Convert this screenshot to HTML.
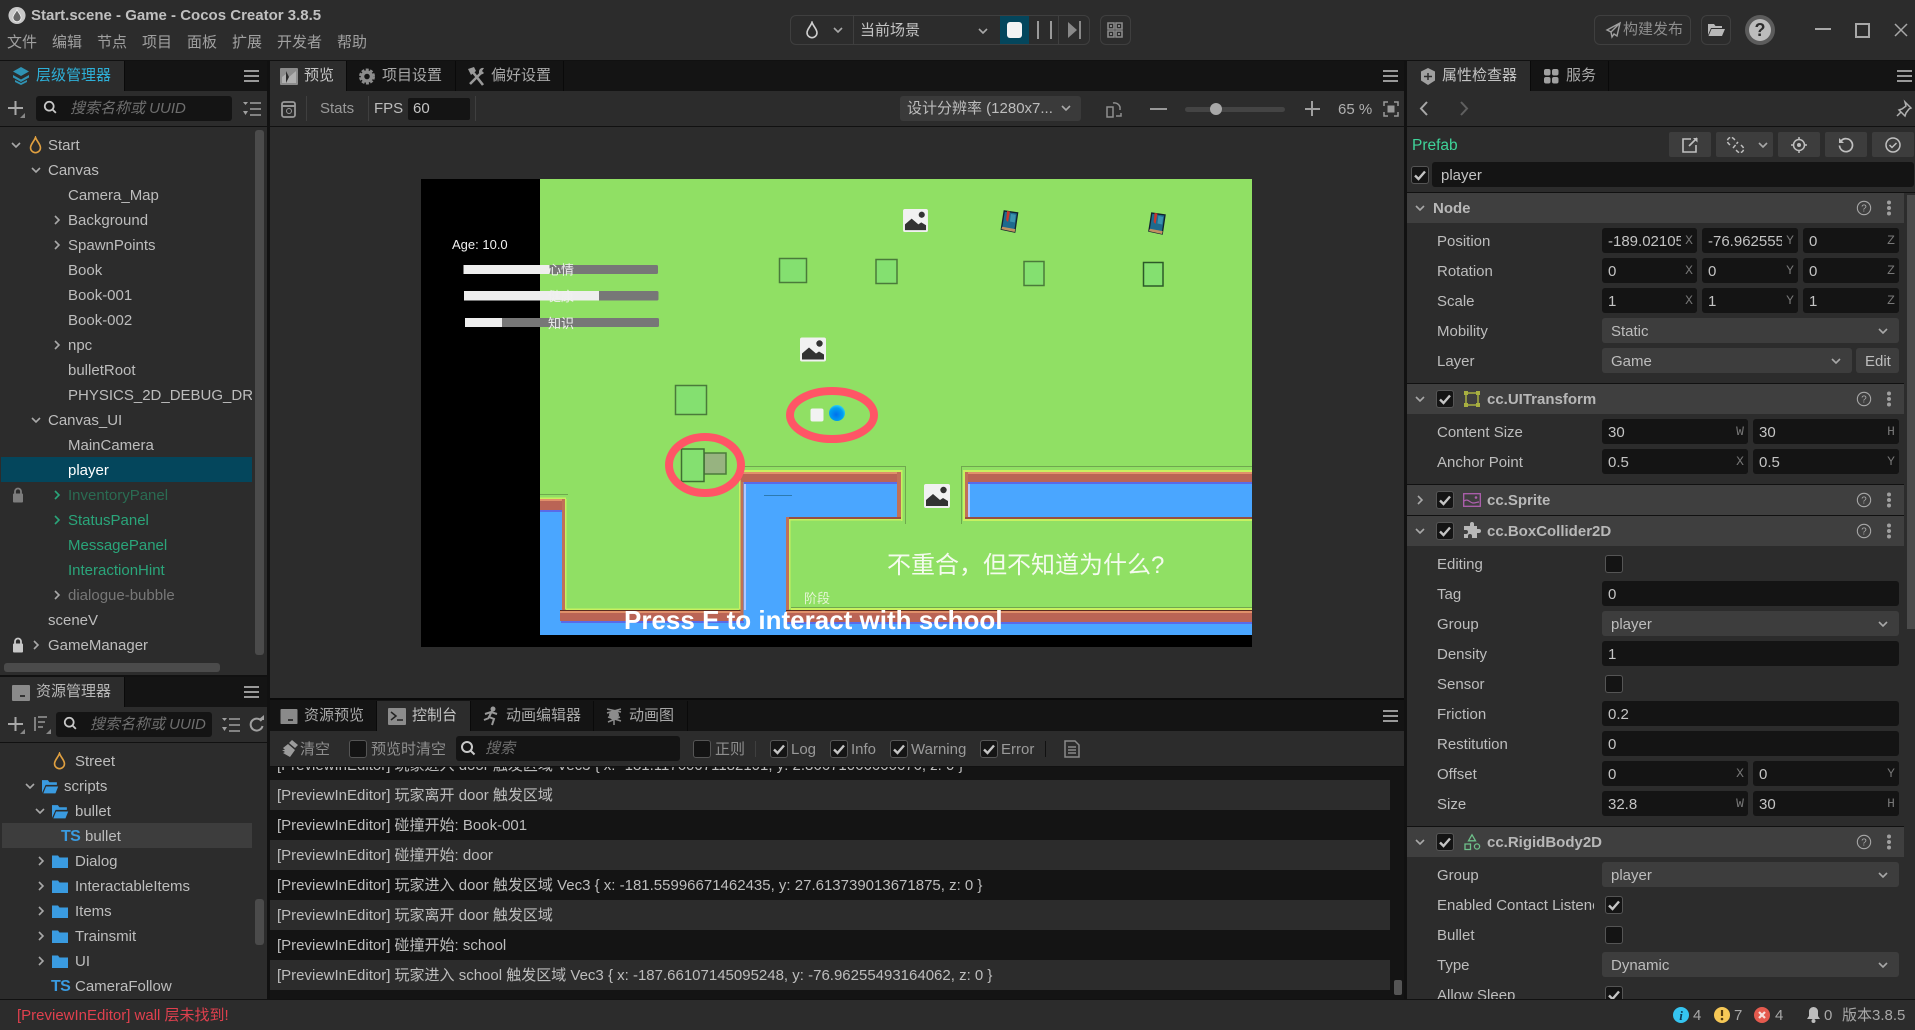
<!DOCTYPE html>
<html lang="zh"><head><meta charset="utf-8"><title>Start.scene - Game - Cocos Creator 3.8.5</title>
<style>
html,body{margin:0;padding:0;width:1915px;height:1030px;overflow:hidden;background:#2c2c2c}
body{position:relative;font:15px "Liberation Sans","Noto Sans CJK SC",sans-serif;color:#bdbdbd}
.a{position:absolute}
.t{position:absolute;white-space:nowrap;line-height:25px;height:25px}
.l{margin-top:1px}
.d{position:absolute;background:#111}
.bar{position:absolute;background:#141414}
.tab{position:absolute;background:#141414;border-right:1px solid #0a0a0a;height:30px}
.tab.on{background:#2c2c2c}
.in{position:absolute;background:#141414;border-radius:3px;height:25px;line-height:27px;color:#c4c4c4;padding-left:6px;box-sizing:border-box;overflow:hidden;white-space:nowrap}
.in b{position:absolute;right:0;top:0;font:13px "Liberation Mono",monospace;line-height:25px;color:#777;font-weight:400;background:#141414;width:16px;text-align:center}
.sel{position:absolute;background:#3d3d3d;border-radius:3px;height:25px;line-height:27px;color:#bdbdbd;padding-left:9px;box-sizing:border-box}
.cb{position:absolute;width:16px;height:16px;background:#141414;border:1px solid #555;border-radius:3px}
.hd{position:absolute;left:1407px;width:497px;height:30px;background:#3f3f3f;line-height:32px}
.hd span{position:absolute;left:80px;font-weight:700;color:#b8b8b8;white-space:nowrap}
.hd.n span{left:26px}
.row{position:absolute;left:270px;width:1120px;height:30px;line-height:32px;white-space:nowrap;color:#bdbdbd;padding-left:7px;box-sizing:border-box;overflow:hidden}
.btn{position:absolute;top:132px;height:25px;background:#3d3d3d;border-radius:2px}
svg{position:absolute;overflow:visible}
.hb{position:absolute;width:15px;height:12px;border-top:2px solid #999;border-bottom:2px solid #999;box-sizing:border-box}
.hb:after{content:"";position:absolute;left:0;right:0;top:3px;height:2px;background:#999}
.ts{font-weight:700;font-size:16px;color:#3a9be0;letter-spacing:-.6px}
</style></head><body>
<svg width="0" height="0" style="position:absolute">
<defs>
<symbol id="cd" viewBox="0 0 12 12"><path d="M2 4l4 4 4-4" fill="none" stroke="#a8a8a8" stroke-width="1.6"/></symbol>
<symbol id="cr" viewBox="0 0 12 12"><path d="M4 2l4 4-4 4" fill="none" stroke="#a8a8a8" stroke-width="1.6"/></symbol>
<symbol id="ck" viewBox="0 0 18 18"><path d="M4 9.500l3.500 3.500L14 5.500" fill="none" stroke="#c4c4c4" stroke-width="2.400"/></symbol>
<symbol id="dr" viewBox="0 0 14 20"><path d="M7 1.500C5.500 6 1.500 9 1.500 13a5.500 5.500 0 0 0 11 0C12.500 9 8.500 6 7 1.500z" fill="none" stroke="currentColor" stroke-width="1.800"/></symbol>
<symbol id="fo" viewBox="0 0 16 14"><path d="M0 1.500h6l1.500 2H16V14H0z" fill="#3a9be0"/></symbol>
<symbol id="fx" viewBox="0 0 16 14"><path d="M0 1h5.500l1.500 2H14v2.500H3.500L0 13z" fill="#3a9be0"/><path d="M3.500 6.500H16L13 14H.5z" fill="#3a9be0" stroke="#2c2c2c"/></symbol>
<symbol id="lk" viewBox="0 0 12 16"><path d="M3 7V4.500a3 3 0 0 1 6 0V7" fill="none" stroke="#a0a0a0" stroke-width="1.800"/><rect x="1" y="6.500" width="10" height="9" rx="1" fill="#a0a0a0"/></symbol>
<symbol id="pl" viewBox="0 0 18 18"><path d="M8.500 1v14M1 8h15" stroke="#a8a8a8" stroke-width="2"/><path d="M18 13v5h-5z" fill="#888"/></symbol>
<symbol id="mg" viewBox="0 0 18 18"><circle cx="7" cy="7" r="5" fill="none" stroke="#c8c8c8" stroke-width="2"/><path d="M10.500 10.500l4 4" stroke="#c8c8c8" stroke-width="2"/></symbol>
<symbol id="ls" viewBox="0 0 18 14"><path d="M7 1h11M7 7h11M7 13h11" stroke="#a0a0a0" stroke-width="1.500"/><path d="M0 0h5L2.500 3zM0 9h5l-2.500 4z" fill="#a0a0a0"/></symbol>
<symbol id="qm" viewBox="0 0 18 18"><circle cx="9" cy="9" r="7.500" fill="none" stroke="#a8a8a8" stroke-width="1.200"/><text x="9" y="13" font-family="Liberation Sans" font-size="11" text-anchor="middle" fill="#a8a8a8">?</text></symbol>
<symbol id="vd" viewBox="0 0 6 16"><circle cx="3" cy="2.500" r="2" fill="#a0a0a0"/><circle cx="3" cy="8" r="2" fill="#a0a0a0"/><circle cx="3" cy="13.500" r="2" fill="#a0a0a0"/></symbol>
<symbol id="pic" viewBox="0 0 26 24"><rect width="26" height="24" rx="2" fill="#f1f1f1"/><path d="M2 22v-6l7-6 7 6 3-2 5 3v5z" fill="#333"/><circle cx="19.500" cy="6" r="3.200" fill="#333"/></symbol>
<symbol id="bk" viewBox="0 0 20 24"><path d="M5 1l14 2-3 20-14-3z" fill="#1e6a8e" stroke="#10222e" stroke-width="1.400"/><path d="M3 17.500l13.500 2.500-.6 3-13.900-3z" fill="#c09060"/><path d="M8 1l3 .5-2 11-2-2z" fill="#c8372a"/><path d="M12 4l5 1-1 8-5-1z" fill="#3a92ae"/></symbol>
<symbol id="tb" viewBox="0 0 18 18"><rect y="1" width="18" height="16" rx="1" fill="#8a8a8a"/></symbol>
</defs></svg>

<!-- TITLE BAR -->
<svg style="left:8px;top:6px" width="18" height="19" viewBox="0 0 20 20"><circle cx="10" cy="10" r="9.500" fill="#c8c8c8"/><path d="M10 3.500c-1 3-4.500 5.500-4.500 9a4.500 4.500 0 0 0 9 0c0-3.500-3.500-6-4.500-9z" fill="#666" stroke="#eee"/></svg>
<div class="t" style="left:31px;top:3px;font-size:15px;font-weight:700;color:#c0c0c0">Start.scene - Game - Cocos Creator 3.8.5</div>
<div class="t" style="left:7px;top:30px;color:#a0a0a0">文件</div>
<div class="t" style="left:52px;top:30px;color:#a0a0a0">编辑</div>
<div class="t" style="left:97px;top:30px;color:#a0a0a0">节点</div>
<div class="t" style="left:142px;top:30px;color:#a0a0a0">项目</div>
<div class="t" style="left:187px;top:30px;color:#a0a0a0">面板</div>
<div class="t" style="left:232px;top:30px;color:#a0a0a0">扩展</div>
<div class="t" style="left:277px;top:30px;color:#a0a0a0">开发者</div>
<div class="t" style="left:337px;top:30px;color:#a0a0a0">帮助</div>

<div class="a" style="left:790px;top:15px;width:298px;height:28px;border:1px solid #3f3f3f;border-radius:6px"></div>
<svg style="left:805px;top:21px;color:#cfcfcf" width="14" height="18"><use href="#dr"/></svg>
<svg style="left:832px;top:24px" width="12" height="12"><use href="#cd"/></svg>
<div class="a" style="left:853px;top:16px;width:1px;height:28px;background:#3f3f3f"></div>
<div class="t" style="left:860px;top:18px;color:#c4c4c4">当前场景</div>
<svg style="left:977px;top:25px" width="12" height="12"><use href="#cd"/></svg>
<div class="a" style="left:1000px;top:16px;width:29px;height:28px;background:#04465c"></div>
<div class="a" style="left:1007px;top:22px;width:15px;height:16px;background:#f4f4f4;border-radius:3px"></div>
<div class="a" style="left:1037px;top:21px;width:2px;height:18px;background:#9a9a9a"></div>
<div class="a" style="left:1050px;top:21px;width:2px;height:18px;background:#9a9a9a"></div>
<div class="a" style="left:1058px;top:16px;width:1px;height:28px;background:#3f3f3f"></div>
<svg style="left:1067px;top:21px" width="15" height="18"><path d="M1 1l9 8-9 8z" fill="#888"/><path d="M13 0v18" stroke="#888" stroke-width="2"/></svg>
<div class="a" style="left:1100px;top:15px;width:29px;height:28px;border:1px solid #3f3f3f;border-radius:6px"></div>
<svg style="left:1107px;top:22px" width="16" height="16"><path d="M1 1h6v6H1zM9 1h6v6H9zM1 9h6v6H1zM9 9h6v6H9z" fill="none" stroke="#8a8a8a" stroke-width="1.600"/><path d="M3 3h2v2H3zM11 3h2v2h-2zM3 11h2v2H3zM11 11h2v2h-2z" fill="#8a8a8a"/></svg>

<div class="a" style="left:1594px;top:15px;width:95px;height:28px;border:1px solid #3f3f3f;border-radius:6px"></div>
<svg style="left:1606px;top:22px" width="15" height="16"><path d="M14 1L1 8l4 2 1 5 2-3 3 2zM5 10l9-9" fill="none" stroke="#a0a0a0" stroke-width="1.400"/></svg>
<div class="t" style="left:1623px;top:17px;color:#8e8e8e">构建发布</div>
<div class="a" style="left:1701px;top:15px;width:28px;height:28px;border:1px solid #3f3f3f;border-radius:6px"></div>
<svg style="left:1708px;top:23px" width="17" height="13"><path d="M0 1h6l1.500 2H14v2H3L0 12z" fill="#b8b8b8"/><path d="M3.500 6H17l-3 7H.5z" fill="#b8b8b8"/></svg>
<div class="a" style="left:1745px;top:15px;width:30px;height:30px;border-radius:50%;background:#5c5c5c"></div>
<div class="a" style="left:1749px;top:19px;width:22px;height:22px;border-radius:50%;background:#bcbcbc;color:#2c2c2c;font-weight:700;font-size:18px;line-height:22px;text-align:center">?</div>
<div class="a" style="left:1815px;top:28px;width:16px;height:2px;background:#a8a8a8"></div>
<div class="a" style="left:1855px;top:23px;width:11px;height:11px;border:2px solid #a8a8a8"></div>
<svg style="left:1894px;top:23px" width="14" height="14"><path d="M1 1l12 12M13 1L1 13" stroke="#a8a8a8" stroke-width="1.500"/></svg>

<div class="d" style="left:0;top:60px;width:1915px;height:1px"></div>

<!-- LEFT: HIERARCHY -->
<div class="bar" style="left:0;top:61px;width:267px;height:30px"></div>
<div class="tab on" style="left:0;top:61px;width:124px"></div>
<svg style="left:12px;top:67px" width="18" height="18"><path d="M9 0l8 4.500-8 4.500-8-4.500z" fill="#2f93b4"/><path d="M1 8l8 4.500L17 8v2.500L9 15l-8-4.500z" fill="#2f93b4"/><path d="M3 13l6 3 6-3v2l-6 3-6-3z" fill="#2f93b4"/></svg>
<div class="t" style="left:36px;top:63px;color:#2eb0d8">层级管理器</div>
<div class="hb" style="left:244px;top:70px"></div>
<svg style="left:7px;top:100px" width="18" height="18"><use href="#pl"/></svg>
<div class="in" style="left:36px;top:96px;width:196px"></div>
<svg style="left:43px;top:100px" width="16" height="16"><use href="#mg"/></svg>
<div class="t" style="left:70px;top:96px;font-style:italic;color:#6e6e6e">搜索名称或 UUID</div>
<svg style="left:243px;top:102px" width="18" height="14"><use href="#ls"/></svg>
<div class="d" style="left:0;top:126px;width:267px;height:1px"></div>

<svg style="left:10px;top:139px" width="12" height="12"><use href="#cd"/></svg>
<svg style="left:29px;top:136px;color:#e0a040" width="13" height="18"><use href="#dr"/></svg>
<div class="t l" style="left:48px;top:132px">Start</div>
<svg style="left:30px;top:164px" width="12" height="12"><use href="#cd"/></svg>
<div class="t l" style="left:48px;top:157px">Canvas</div>
<div class="t l" style="left:68px;top:182px">Camera_Map</div>
<svg style="left:51px;top:214px" width="12" height="12"><use href="#cr"/></svg>
<div class="t l" style="left:68px;top:207px">Background</div>
<svg style="left:51px;top:239px" width="12" height="12"><use href="#cr"/></svg>
<div class="t l" style="left:68px;top:232px">SpawnPoints</div>
<div class="t l" style="left:68px;top:257px">Book</div>
<div class="t l" style="left:68px;top:282px">Book-001</div>
<div class="t l" style="left:68px;top:307px">Book-002</div>
<svg style="left:51px;top:339px" width="12" height="12"><use href="#cr"/></svg>
<div class="t l" style="left:68px;top:332px">npc</div>
<div class="t l" style="left:68px;top:357px">bulletRoot</div>
<div class="a" style="left:68px;top:382px;width:184px;height:27px;overflow:hidden"><div class="t l" style="left:0;top:0">PHYSICS_2D_DEBUG_DRAW</div></div>
<svg style="left:30px;top:414px" width="12" height="12"><use href="#cd"/></svg>
<div class="t l" style="left:48px;top:407px">Canvas_UI</div>
<div class="t l" style="left:68px;top:432px">MainCamera</div>
<div class="a" style="left:1px;top:457px;width:251px;height:25px;background:#04465c"></div>
<div class="t l" style="left:68px;top:457px;color:#fff">player</div>
<svg style="left:12px;top:487px" width="12" height="16" opacity=".7"><use href="#lk"/></svg>
<svg style="left:51px;top:489px" width="12" height="12"><path d="M4 2l4 4-4 4" fill="none" stroke="#2aa57a" stroke-width="1.600"/></svg>
<div class="t l" style="left:68px;top:482px;color:#2a6b52">InventoryPanel</div>
<svg style="left:51px;top:514px" width="12" height="12"><path d="M4 2l4 4-4 4" fill="none" stroke="#2aa57a" stroke-width="1.600"/></svg>
<div class="t l" style="left:68px;top:507px;color:#2aa57a">StatusPanel</div>
<div class="t l" style="left:68px;top:532px;color:#2aa57a">MessagePanel</div>
<div class="t l" style="left:68px;top:557px;color:#2aa57a">InteractionHint</div>
<svg style="left:51px;top:589px" width="12" height="12"><use href="#cr"/></svg>
<div class="t l" style="left:68px;top:582px;color:#777">dialogue-bubble</div>
<div class="t l" style="left:48px;top:607px">sceneV</div>
<svg style="left:12px;top:637px" width="12" height="16"><path d="M3 7V4.500a3 3 0 0 1 6 0V7" fill="none" stroke="#c8c8c8" stroke-width="1.800"/><rect x="1" y="6.500" width="10" height="9" rx="1" fill="#c8c8c8"/></svg>
<svg style="left:30px;top:639px" width="12" height="12"><use href="#cr"/></svg>
<div class="t l" style="left:48px;top:632px">GameManager</div>
<div class="a" style="left:255px;top:130px;width:9px;height:525px;background:#4b4b4b;border-radius:3px"></div>
<div class="a" style="left:4px;top:663px;width:216px;height:9px;background:#4b4b4b;border-radius:3px"></div>
<div class="d" style="left:0;top:675px;width:267px;height:2px"></div>

<!-- LEFT: ASSETS -->
<div class="bar" style="left:0;top:677px;width:267px;height:30px"></div>
<div class="tab on" style="left:0;top:677px;width:124px"></div>
<svg style="left:12px;top:684px" width="18" height="18"><use href="#tb"/><rect x="8" y="11" width="5" height="2" fill="#333"/></svg>
<div class="t" style="left:36px;top:679px;color:#b8b8b8">资源管理器</div>
<div class="hb" style="left:244px;top:686px"></div>
<svg style="left:7px;top:716px" width="18" height="18"><use href="#pl"/></svg>
<svg style="left:33px;top:716px" width="18" height="18"><path d="M2 1v14M5 1h9M5 6h7M5 11h5" stroke="#8a8a8a" stroke-width="1.800"/><path d="M18 13v5h-5z" fill="#888"/></svg>
<div class="in" style="left:56px;top:712px;width:156px"></div>
<svg style="left:63px;top:716px" width="16" height="16"><use href="#mg"/></svg>
<div class="t" style="left:90px;top:712px;font-style:italic;color:#6e6e6e">搜索名称或 UUID</div>
<svg style="left:222px;top:718px" width="18" height="14"><use href="#ls"/></svg>
<svg style="left:249px;top:716px" width="15" height="17"><path d="M12.500 5A6 6 0 1 0 13.500 10" fill="none" stroke="#a0a0a0" stroke-width="2"/><path d="M9 4h6V-1z" fill="#a0a0a0"/></svg>
<div class="d" style="left:0;top:742px;width:267px;height:1px"></div>

<svg style="left:53px;top:752px;color:#e0a040" width="13" height="18"><use href="#dr"/></svg>
<div class="t" style="left:75px;top:749px">Street</div>
<svg style="left:24px;top:780px" width="12" height="12"><use href="#cd"/></svg>
<svg style="left:42px;top:779px" width="17" height="15"><use href="#fx"/></svg>
<div class="t" style="left:64px;top:774px">scripts</div>
<svg style="left:34px;top:805px" width="12" height="12"><use href="#cd"/></svg>
<svg style="left:52px;top:804px" width="17" height="15"><use href="#fx"/></svg>
<div class="t" style="left:75px;top:799px">bullet</div>
<div class="a" style="left:2px;top:823px;width:250px;height:25px;background:#3d3d3d"></div>
<div class="t ts" style="left:61px;top:824px">TS</div>
<div class="t" style="left:85px;top:824px">bullet</div>
<svg style="left:35px;top:855px" width="12" height="12"><use href="#cr"/></svg>
<svg style="left:52px;top:854px" width="16" height="14"><use href="#fo"/></svg>
<div class="t" style="left:75px;top:849px">Dialog</div>
<svg style="left:35px;top:880px" width="12" height="12"><use href="#cr"/></svg>
<svg style="left:52px;top:879px" width="16" height="14"><use href="#fo"/></svg>
<div class="t" style="left:75px;top:874px">InteractableItems</div>
<svg style="left:35px;top:905px" width="12" height="12"><use href="#cr"/></svg>
<svg style="left:52px;top:904px" width="16" height="14"><use href="#fo"/></svg>
<div class="t" style="left:75px;top:899px">Items</div>
<svg style="left:35px;top:930px" width="12" height="12"><use href="#cr"/></svg>
<svg style="left:52px;top:929px" width="16" height="14"><use href="#fo"/></svg>
<div class="t" style="left:75px;top:924px">Trainsmit</div>
<svg style="left:35px;top:955px" width="12" height="12"><use href="#cr"/></svg>
<svg style="left:52px;top:954px" width="16" height="14"><use href="#fo"/></svg>
<div class="t" style="left:75px;top:949px">UI</div>
<div class="t ts" style="left:51px;top:974px">TS</div>
<div class="t" style="left:75px;top:974px">CameraFollow</div>
<div class="a" style="left:255px;top:899px;width:9px;height:46px;background:#4b4b4b;border-radius:3px"></div>

<!-- vertical dividers -->
<div class="d" style="left:267px;top:61px;width:3px;height:939px"></div>
<div class="d" style="left:1404px;top:61px;width:3px;height:939px"></div>

<!-- CENTER TABS -->
<div class="bar" style="left:270px;top:61px;width:1134px;height:30px"></div>
<div class="tab on" style="left:270px;top:61px;width:76px"></div>
<svg style="left:280px;top:68px" width="18" height="17"><rect width="18" height="17" rx="1" fill="#8c8c8c"/><path d="M2 15V9l4-3 3 3 7-6v12z" fill="#b0b0b0"/><path d="M6 3l3 6-3 6z" fill="#2c2c2c"/></svg>
<div class="t" style="left:304px;top:63px;color:#c4c4c4">预览</div>
<div class="tab" style="left:347px;top:61px;width:108px"></div>
<svg style="left:359px;top:68px" width="16" height="17"><circle cx="8" cy="8.500" r="7" fill="none" stroke="#8c8c8c" stroke-width="2" stroke-dasharray="3 1.500"/><circle cx="8" cy="8.500" r="4.500" fill="none" stroke="#8c8c8c" stroke-width="3.500"/></svg>
<div class="t" style="left:382px;top:63px;color:#a8a8a8">项目设置</div>
<div class="tab" style="left:456px;top:61px;width:107px"></div>
<svg style="left:467px;top:67px" width="18" height="19"><path d="M5 4l11 14" stroke="#999" stroke-width="2.600"/><path d="M1 2l6-2 2 4-5 4z" fill="#999"/><path d="M15 5L3 17" stroke="#999" stroke-width="2.600"/><path d="M12 4a4 4 0 0 1 5-3l-2 3 2 2a4 4 0 0 1-5 1z" fill="#999"/></svg>
<div class="t" style="left:491px;top:63px;color:#a8a8a8">偏好设置</div>
<div class="hb" style="left:1383px;top:70px"></div>

<!-- PREVIEW TOOLBAR -->
<svg style="left:281px;top:101px" width="16" height="18"><rect x="1" y="1" width="13" height="15" rx="2" fill="none" stroke="#999" stroke-width="1.800"/><path d="M1 5h13" stroke="#999" stroke-width="2"/><circle cx="8" cy="10" r="2.500" fill="none" stroke="#999"/></svg>
<div class="a" style="left:306px;top:96px;width:1px;height:25px;background:#3f3f3f"></div>
<div class="t l" style="left:320px;top:95px;color:#999">Stats</div>
<div class="a" style="left:368px;top:96px;width:1px;height:25px;background:#3f3f3f"></div>
<div class="t l" style="left:374px;top:95px;color:#bdbdbd">FPS</div>
<div class="in" style="left:408px;top:98px;width:62px;height:22px;line-height:22px;padding-left:5px;border-radius:2px">60</div>
<div class="a" style="left:475px;top:96px;width:1px;height:25px;background:#3f3f3f"></div>
<div class="a" style="left:900px;top:96px;width:181px;height:25px;background:#3a3a3a;border-radius:3px"></div>
<div class="t l" style="left:907px;top:95px;color:#bdbdbd">设计分辨率 (1280x7...</div>
<svg style="left:1060px;top:102px" width="12" height="12"><use href="#cd"/></svg>
<svg style="left:1106px;top:100px" width="16" height="18"><rect x="1" y="7" width="6" height="10" fill="none" stroke="#8e8e8e" stroke-width="1.500"/><path d="M7 3a6 6 0 0 1 7 4v3M10 16h5v-3" fill="none" stroke="#8e8e8e" stroke-width="1.500"/></svg>
<div class="a" style="left:1150px;top:108px;width:17px;height:2px;background:#999"></div>
<div class="a" style="left:1185px;top:107px;width:100px;height:5px;background:#444;border-radius:3px"></div>
<div class="a" style="left:1210px;top:103px;width:12px;height:12px;background:#a8a8a8;border-radius:50%"></div>
<div class="a" style="left:1305px;top:108px;width:15px;height:2px;background:#a0a0a0"></div>
<div class="a" style="left:1311px;top:101px;width:2px;height:15px;background:#a0a0a0"></div>
<div class="t" style="left:1338px;top:97px;color:#b0b0b0">65 %</div>
<svg style="left:1383px;top:101px" width="16" height="16"><path d="M1 5V1h4M11 1h4v4M15 11v4h-4M5 15H1v-4" fill="none" stroke="#999" stroke-width="1.500"/><rect x="4.500" y="4.500" width="7" height="7" fill="#999"/></svg>
<div class="d" style="left:270px;top:126px;width:1134px;height:1px"></div>

<!-- GAME -->
<svg style="left:0;top:0" width="1915" height="1030" viewBox="0 0 1915 1030" font-family="Liberation Sans,Noto Sans CJK SC,sans-serif">
<rect x="421" y="179" width="831" height="468" fill="#000"/>
<rect x="540" y="179" width="712" height="456" fill="#90e064"/>
<g fill="#4aa6ff">
<rect x="540" y="512" width="24" height="123"/><rect x="540" y="620" width="712" height="15"/>
<rect x="743" y="480" width="46" height="140"/><rect x="743" y="480" width="156" height="38"/><rect x="966" y="480" width="286" height="38"/>
</g>
<g>
<rect x="540" y="494" width="28" height="1" fill="#6fa84e"/>
<rect x="540" y="497.500" width="26" height="1.500" fill="#c8f060"/>
<rect x="540" y="499" width="24" height="11" fill="#ba6455"/><rect x="540" y="499" width="24" height="2" fill="#e0906a"/>
<rect x="540" y="510" width="22" height="2" fill="#5a6ae8"/>
<rect x="562" y="499" width="3" height="112" fill="#c07058"/><rect x="565" y="499" width="1.500" height="110" fill="#c8f060"/>
<rect x="566" y="608.500" width="173" height="1.500" fill="#c8f060"/>
<rect x="560" y="610" width="183" height="11" fill="#ba6455"/><rect x="560" y="610" width="183" height="1" fill="#5a2a20"/><rect x="560" y="611" width="183" height="2" fill="#e0906a"/>
<rect x="561" y="621" width="183" height="2" fill="#5a6ae8"/>
<rect x="739" y="470" width="1.500" height="139" fill="#c8f060"/><rect x="740.500" y="472" width="3" height="148" fill="#c07058"/><rect x="744" y="483" width="2" height="127" fill="#b0c8ff"/>
<rect x="742" y="466" width="164" height="1" fill="#6fa84e"/><rect x="905" y="466" width="1" height="58" fill="#6fa84e"/>
<rect x="741" y="470" width="161" height="2" fill="#c8f060"/>
<rect x="741" y="472" width="160" height="10" fill="#ba6455"/><rect x="741" y="472" width="160" height="2" fill="#e0906a"/>
<rect x="744" y="482" width="153" height="2" fill="#5a6ae8"/>
<rect x="897" y="472" width="4" height="47" fill="#c07058"/><rect x="901" y="470" width="1.500" height="51" fill="#c8f060"/>
<rect x="787" y="517" width="114" height="2" fill="#9a4f3f"/><rect x="789" y="519" width="113" height="1.500" fill="#c8f060"/>
<rect x="786" y="517" width="3" height="96" fill="#c07058"/><rect x="789" y="519" width="1.500" height="90" fill="#c8f060"/>
<rect x="764" y="495" width="28" height="1" fill="#2d7ab0"/>
<rect x="791" y="607" width="461" height="1" fill="#6fa84e"/><rect x="791" y="608" width="461" height="2" fill="#c8f060"/>
<rect x="786" y="610" width="466" height="12" fill="#ba6455"/><rect x="786" y="610" width="466" height="1" fill="#5a2a20"/><rect x="786" y="611" width="466" height="2" fill="#e0906a"/>
<rect x="786" y="622" width="466" height="2" fill="#5a6ae8"/>
<rect x="961" y="466" width="291" height="1" fill="#6fa84e"/><rect x="961" y="466" width="1" height="58" fill="#6fa84e"/>
<rect x="963" y="470" width="289" height="2" fill="#c8f060"/><rect x="963" y="470" width="2" height="51" fill="#c8f060"/>
<rect x="965" y="472" width="287" height="10" fill="#ba6455"/><rect x="965" y="472" width="287" height="2" fill="#e0906a"/>
<rect x="968" y="482" width="284" height="2" fill="#5a6ae8"/>
<rect x="965" y="472" width="3" height="47" fill="#c07058"/><rect x="968" y="484" width="2" height="33" fill="#b0c8ff"/>
<rect x="965" y="517" width="287" height="2" fill="#9a4f3f"/><rect x="963" y="519" width="289" height="2" fill="#c8f060"/>
</g>
<g fill="#84e070" stroke="#4a7a3a" stroke-width="1.500">
<rect x="779.500" y="258.500" width="27" height="24"/><rect x="876" y="259.500" width="21" height="24"/><rect x="1024" y="261.500" width="20" height="24"/><rect x="1143.500" y="262.500" width="19.500" height="23.500" stroke="#2c5a28"/><rect x="675.500" y="385.500" width="31" height="29"/>
</g>
<rect x="704" y="453" width="22" height="21" fill="#97b380" stroke="#4a7a3a" stroke-width="1.500"/>
<rect x="681.500" y="449" width="22.500" height="32.500" fill="#84e070" stroke="#3e6e32" stroke-width="1.500"/>
<use href="#pic" x="902" y="209" width="27" height="23"/><use href="#pic" x="800" y="337" width="26" height="25"/><use href="#pic" x="924" y="484" width="26" height="24"/>
<use href="#bk" x="999" y="210" width="20" height="23"/><use href="#bk" x="1147" y="212" width="19" height="23"/>
<ellipse cx="832" cy="415" rx="42" ry="24" fill="none" stroke="#ff5566" stroke-width="8"/>
<ellipse cx="705" cy="465" rx="36" ry="28" fill="none" stroke="#ff5566" stroke-width="8"/>
<rect x="810.500" y="408.500" width="13" height="13" rx="2" fill="#f2f2f2"/>
<defs><radialGradient id="ball" cx=".45" cy=".6" r=".6"><stop offset="0" stop-color="#0070ee"/><stop offset=".7" stop-color="#00a0f0"/><stop offset="1" stop-color="#30d0f0"/></radialGradient></defs>
<circle cx="837" cy="413" r="8" fill="url(#ball)"/>
<text x="452" y="249" font-size="13" fill="#f0f0f0">Age: 10.0</text>
<g fill="#777"><rect x="463.500" y="265" width="194.500" height="9" rx="1.500"/><rect x="464" y="291" width="194.500" height="9.500" rx="1.500"/><rect x="465" y="318" width="194" height="9" rx="1.500"/></g>
<g fill="#eeeeee"><rect x="463.500" y="265" width="86" height="9"/><rect x="464" y="291" width="135" height="9.500"/><rect x="465" y="318" width="37" height="9"/></g>
<g font-size="13" fill="#f0f0f0" text-anchor="middle"><text x="561" y="274.500">心情</text><text x="561" y="301">健康</text><text x="561" y="328">知识</text></g>
<text x="804" y="603" font-size="13" fill="#e4f5d4">阶段</text>
<text x="887" y="573" font-size="24" fill="#f4fbee">不重合，但不知道为什么?</text>
<text x="624" y="629" font-size="26" font-weight="700" fill="#fff">Press E to interact with school</text>
</svg>

<div class="d" style="left:270px;top:698px;width:1134px;height:2px;background:#0a0a0a"></div>

<!-- BOTTOM TABS -->
<div class="bar" style="left:270px;top:700px;width:1134px;height:31px"></div>
<div class="tab" style="left:270px;top:701px;width:106px"></div>
<svg style="left:280px;top:708px" width="18" height="17"><use href="#tb"/><rect x="8" y="11" width="5" height="2" fill="#333"/></svg>
<div class="t" style="left:304px;top:703px;color:#a8a8a8">资源预览</div>
<div class="tab on" style="left:377px;top:701px;width:93px"></div>
<svg style="left:388px;top:708px" width="18" height="17"><rect width="18" height="17" rx="1" fill="#8c8c8c"/><path d="M3 4l5 4-5 4M9 12h6" fill="none" stroke="#222" stroke-width="1.500"/></svg>
<div class="t" style="left:412px;top:703px;color:#c4c4c4">控制台</div>
<div class="tab" style="left:471px;top:701px;width:122px"></div>
<svg style="left:483px;top:706px" width="17" height="20"><circle cx="10" cy="3" r="2.500" fill="#999"/><path d="M9 5L6 11l5 2-2 6M2 8l6-2 6 2M6 12L1 14" fill="none" stroke="#999" stroke-width="2"/></svg>
<div class="t" style="left:506px;top:703px;color:#a8a8a8">动画编辑器</div>
<div class="tab" style="left:594px;top:701px;width:93px"></div>
<svg style="left:605px;top:706px" width="18" height="20"><circle cx="9" cy="9" r="5" fill="#8c8c8c"/><path d="M2 3l14 3M16 3L2 7M3 11l13 4M15 11L3 16M9 14v5" stroke="#8c8c8c" stroke-width="1.500"/></svg>
<div class="t" style="left:629px;top:703px;color:#a8a8a8">动画图</div>
<div class="hb" style="left:1383px;top:710px"></div>

<!-- CONSOLE TOOLBAR -->
<svg style="left:282px;top:740px" width="17" height="17"><path d="M10 0l6 5-3 3-6-5zM6 4l7 6-5 7-7-4 2-1-3-2 3 0-2-2z" fill="#9c9c9c"/></svg>
<div class="t l" style="left:300px;top:736px;color:#8e8e8e">清空</div>
<div class="cb" style="left:349px;top:740px"></div>
<div class="t l" style="left:371px;top:736px;color:#8e8e8e">预览时清空</div>
<div class="in" style="left:456px;top:736px;width:224px"></div>
<svg style="left:460px;top:740px" width="18" height="18"><use href="#mg"/></svg>
<div class="t" style="left:485px;top:736px;font-style:italic;color:#6e6e6e">搜索</div>
<div class="cb" style="left:693px;top:740px"></div>
<div class="t l" style="left:715px;top:736px;color:#8e8e8e">正则</div>
<div class="a" style="left:755px;top:741px;width:1px;height:16px;background:#3f3f3f"></div>
<div class="cb" style="left:770px;top:740px"></div><svg style="left:770px;top:740px" width="18" height="18"><use href="#ck"/></svg>
<div class="t l" style="left:791px;top:736px;color:#9a9a9a">Log</div>
<div class="cb" style="left:830px;top:740px"></div><svg style="left:830px;top:740px" width="18" height="18"><use href="#ck"/></svg>
<div class="t l" style="left:851px;top:736px;color:#9a9a9a">Info</div>
<div class="cb" style="left:890px;top:740px"></div><svg style="left:890px;top:740px" width="18" height="18"><use href="#ck"/></svg>
<div class="t l" style="left:911px;top:736px;color:#9a9a9a">Warning</div>
<div class="cb" style="left:980px;top:740px"></div><svg style="left:980px;top:740px" width="18" height="18"><use href="#ck"/></svg>
<div class="t l" style="left:1001px;top:736px;color:#9a9a9a">Error</div>
<div class="a" style="left:1045px;top:741px;width:1px;height:16px;background:#111"></div>
<svg style="left:1064px;top:740px" width="16" height="18"><path d="M1 1h10l4 4v12H1zM4 7h8M4 10h8M4 13h8" fill="none" stroke="#8a8a8a" stroke-width="1.500"/></svg>
<div class="d" style="left:270px;top:766px;width:1134px;height:1px"></div>

<!-- CONSOLE -->
<div class="a" style="left:270px;top:767px;width:1134px;height:232px;background:#141414;overflow:hidden">
<div class="row" style="left:0;top:-17px;color:#bdbdbd">[PreviewInEditor] 玩家进入 door 触发区域 Vec3 { x: -181.11760071182101, y: 2.86671066666676, z: 0 }</div>
<div class="row" style="left:0;top:13px;background:#2c2c2c">[PreviewInEditor] 玩家离开 door 触发区域</div>
<div class="row" style="left:0;top:43px">[PreviewInEditor] 碰撞开始: Book-001</div>
<div class="row" style="left:0;top:73px;background:#2c2c2c">[PreviewInEditor] 碰撞开始: door</div>
<div class="row" style="left:0;top:103px">[PreviewInEditor] 玩家进入 door 触发区域 Vec3 { x: -181.55996671462435, y: 27.613739013671875, z: 0 }</div>
<div class="row" style="left:0;top:133px;background:#2c2c2c">[PreviewInEditor] 玩家离开 door 触发区域</div>
<div class="row" style="left:0;top:163px">[PreviewInEditor] 碰撞开始: school</div>
<div class="row" style="left:0;top:193px;background:#2c2c2c">[PreviewInEditor] 玩家进入 school 触发区域 Vec3 { x: -187.66107145095248, y: -76.96255493164062, z: 0 }</div>
<div class="a" style="left:1124px;top:213px;width:8px;height:15px;background:#555;border-radius:2px"></div>
</div>

<!-- INSPECTOR -->
<div class="bar" style="left:1407px;top:61px;width:508px;height:30px"></div>
<div class="tab on" style="left:1407px;top:61px;width:123px"></div>
<svg style="left:1420px;top:68px" width="16" height="17"><path d="M8 0l7 3.500v9L8 17l-7-4.500v-9z" fill="#a0a0a0"/><path d="M4 8.500h8M8 5v7" stroke="#2c2c2c" stroke-width="1.500"/></svg>
<div class="t" style="left:1442px;top:63px;color:#c4c4c4">属性检查器</div>
<div class="tab" style="left:1531px;top:61px;width:77px"></div>
<svg style="left:1544px;top:69px" width="15" height="15"><g fill="#a0a0a0"><rect width="6.500" height="6.500" rx="2"/><rect x="8" width="6.500" height="6.500" rx="2"/><rect y="8" width="6.500" height="6.500" rx="2"/><rect x="8" y="8" width="6.500" height="6.500" rx="2"/></g></svg>
<div class="t" style="left:1566px;top:63px;color:#a8a8a8">服务</div>
<div class="hb" style="left:1897px;top:70px"></div>
<svg style="left:1419px;top:101px" width="10" height="15"><path d="M8 1L2 7.500 8 14" fill="none" stroke="#a8a8a8" stroke-width="2"/></svg>
<svg style="left:1459px;top:101px" width="10" height="15"><path d="M2 1l6 6.500L2 14" fill="none" stroke="#606060" stroke-width="2"/></svg>
<svg style="left:1896px;top:101px" width="16" height="16"><path d="M9 1l6 6-2 1-3 4-1 3-6-6 3-1 4-3zM5 11l-4 4" fill="none" stroke="#b0b0b0" stroke-width="1.500"/></svg>
<div class="d" style="left:1407px;top:126px;width:508px;height:1px"></div>

<div class="t l" style="left:1412px;top:132px;color:#3fd49a;font-size:15.500px">Prefab</div>
<div class="btn" style="left:1669px;width:42px"></div>
<svg style="left:1682px;top:137px" width="16" height="16"><path d="M9 2H1v13h13V8M7 9l8-8" fill="none" stroke="#c0c0c0" stroke-width="1.600"/><path d="M11 1h4.500v4.500z" fill="#c0c0c0"/></svg>
<div class="btn" style="left:1716px;width:57px"></div>
<svg style="left:1727px;top:137px" width="17" height="16"><path d="M3 8L1.500 6.500a3.500 3.500 0 0 1 5-5L8 3M14 8l1.500 1.500a3.500 3.500 0 0 1-5 5L9 13M6 11l5-6" fill="none" stroke="#c0c0c0" stroke-width="1.500" stroke-dasharray="4 1.500"/></svg>
<svg style="left:1757px;top:139px" width="12" height="12"><use href="#cd"/></svg>
<div class="btn" style="left:1778px;width:42px"></div>
<svg style="left:1791px;top:137px" width="16" height="16"><circle cx="8" cy="8" r="5.500" fill="none" stroke="#c0c0c0" stroke-width="1.500"/><circle cx="8" cy="8" r="2" fill="#c0c0c0"/><path d="M8 0v3M8 13v3M0 8h3M13 8h3" stroke="#c0c0c0" stroke-width="1.500"/></svg>
<div class="btn" style="left:1825px;width:42px"></div>
<svg style="left:1838px;top:137px" width="16" height="16"><path d="M3 4a6.500 6.500 0 1 1-1.500 4.500" fill="none" stroke="#c0c0c0" stroke-width="1.700"/><path d="M1 1v5h5z" fill="#c0c0c0"/></svg>
<div class="btn" style="left:1872px;width:42px"></div>
<svg style="left:1885px;top:137px" width="16" height="16"><circle cx="8" cy="8" r="7" fill="none" stroke="#c0c0c0" stroke-width="1.500"/><path d="M4.500 8l2.500 2.500 4.500-4.500" fill="none" stroke="#c0c0c0" stroke-width="1.500"/></svg>

<div class="cb" style="left:1411px;top:166px"></div><svg style="left:1411px;top:166px" width="18" height="18"><use href="#ck"/></svg>
<div class="in" style="left:1432px;top:162px;width:482px;padding-left:9px">player</div>
<div class="d" style="left:1407px;top:192px;width:508px;height:1px"></div>
<div class="a" style="left:1907px;top:195px;width:8px;height:434px;background:#4b4b4b"></div>

<!-- Node -->
<div class="hd n" style="top:193px"><span>Node</span></div>
<svg style="left:1414px;top:202px" width="12" height="12"><use href="#cd"/></svg>
<svg style="left:1856px;top:200px" width="16" height="16"><use href="#qm"/></svg><svg style="left:1886px;top:200px" width="6" height="16"><use href="#vd"/></svg>

<div class="t l" style="left:1437px;top:228px">Position</div>
<div class="in" style="left:1602px;top:228px;width:95px">-189.02105<b>X</b></div>
<div class="in" style="left:1702px;top:228px;width:96px">-76.962555<b>Y</b></div>
<div class="in" style="left:1803px;top:228px;width:96px">0<b>Z</b></div>
<div class="t l" style="left:1437px;top:258px">Rotation</div>
<div class="in" style="left:1602px;top:258px;width:95px">0<b>X</b></div>
<div class="in" style="left:1702px;top:258px;width:96px">0<b>Y</b></div>
<div class="in" style="left:1803px;top:258px;width:96px">0<b>Z</b></div>
<div class="t l" style="left:1437px;top:288px">Scale</div>
<div class="in" style="left:1602px;top:288px;width:95px">1<b>X</b></div>
<div class="in" style="left:1702px;top:288px;width:96px">1<b>Y</b></div>
<div class="in" style="left:1803px;top:288px;width:96px">1<b>Z</b></div>
<div class="t l" style="left:1437px;top:318px">Mobility</div>
<div class="sel" style="left:1602px;top:318px;width:297px">Static</div>
<svg style="left:1877px;top:325px" width="12" height="12"><use href="#cd"/></svg>
<div class="t l" style="left:1437px;top:348px">Layer</div>
<div class="sel" style="left:1602px;top:348px;width:250px">Game</div>
<svg style="left:1830px;top:355px" width="12" height="12"><use href="#cd"/></svg>
<div class="sel" style="left:1856px;top:348px;width:43px;padding-left:9px">Edit</div>
<div class="d" style="left:1407px;top:383px;width:497px;height:1px"></div>

<!-- UITransform -->
<div class="hd" style="top:384px"><span>cc.UITransform</span></div>
<svg style="left:1414px;top:393px" width="12" height="12"><use href="#cd"/></svg>
<div class="cb" style="left:1436px;top:390px"></div><svg style="left:1436px;top:390px" width="18" height="18"><use href="#ck"/></svg>
<svg style="left:1464px;top:391px" width="16" height="16"><path d="M2 2h12v12H2z" fill="none" stroke="#a8b040" stroke-width="1.500"/><path d="M0 0h4v4H0zM12 0h4v4h-4zM0 12h4v4H0zM12 12h4v4h-4z" fill="#a8b040"/></svg>
<svg style="left:1856px;top:391px" width="16" height="16"><use href="#qm"/></svg><svg style="left:1886px;top:391px" width="6" height="16"><use href="#vd"/></svg>
<div class="t l" style="left:1437px;top:419px">Content Size</div>
<div class="in" style="left:1602px;top:419px;width:146px">30<b>W</b></div>
<div class="in" style="left:1753px;top:419px;width:146px">30<b>H</b></div>
<div class="t l" style="left:1437px;top:449px">Anchor Point</div>
<div class="in" style="left:1602px;top:449px;width:146px">0.5<b>X</b></div>
<div class="in" style="left:1753px;top:449px;width:146px">0.5<b>Y</b></div>
<div class="d" style="left:1407px;top:484px;width:497px;height:1px"></div>

<!-- Sprite -->
<div class="hd" style="top:485px"><span>cc.Sprite</span></div>
<svg style="left:1414px;top:494px" width="12" height="12"><use href="#cr"/></svg>
<div class="cb" style="left:1436px;top:491px"></div><svg style="left:1436px;top:491px" width="18" height="18"><use href="#ck"/></svg>
<svg style="left:1463px;top:493px" width="18" height="14"><rect x=".7" y=".7" width="16.600" height="12.600" fill="none" stroke="#b060b0" stroke-width="1.300"/><path d="M1 8c4-3 6 2 9 2s4-1 6-1" fill="none" stroke="#b060b0" stroke-width="1.200"/><circle cx="13" cy="4.500" r="1.300" fill="#b060b0"/></svg>
<svg style="left:1856px;top:492px" width="16" height="16"><use href="#qm"/></svg><svg style="left:1886px;top:492px" width="6" height="16"><use href="#vd"/></svg>
<div class="d" style="left:1407px;top:515px;width:497px;height:1px"></div>

<!-- BoxCollider -->
<div class="hd" style="top:516px"><span>cc.BoxCollider2D</span></div>
<svg style="left:1414px;top:525px" width="12" height="12"><use href="#cd"/></svg>
<div class="cb" style="left:1436px;top:522px"></div><svg style="left:1436px;top:522px" width="18" height="18"><use href="#ck"/></svg>
<svg style="left:1463px;top:523px" width="17" height="16"><path d="M5 3h2V1a2 2 0 0 1 4 0v2h3v3h2a2 2 0 0 1 0 4h-2v5H9v-2a2 2 0 0 0-4 0v2H1v-4h2a2 2 0 0 0 0-4H1V3z" fill="#b8b8b8"/></svg>
<svg style="left:1856px;top:523px" width="16" height="16"><use href="#qm"/></svg><svg style="left:1886px;top:523px" width="6" height="16"><use href="#vd"/></svg>
<div class="t l" style="left:1437px;top:551px">Editing</div>
<div class="cb" style="left:1605px;top:555px"></div>
<div class="t l" style="left:1437px;top:581px">Tag</div>
<div class="in" style="left:1602px;top:581px;width:297px">0</div>
<div class="t l" style="left:1437px;top:611px">Group</div>
<div class="sel" style="left:1602px;top:611px;width:297px">player</div>
<svg style="left:1877px;top:618px" width="12" height="12"><use href="#cd"/></svg>
<div class="t l" style="left:1437px;top:641px">Density</div>
<div class="in" style="left:1602px;top:641px;width:297px">1</div>
<div class="t l" style="left:1437px;top:671px">Sensor</div>
<div class="cb" style="left:1605px;top:675px"></div>
<div class="t l" style="left:1437px;top:701px">Friction</div>
<div class="in" style="left:1602px;top:701px;width:297px">0.2</div>
<div class="t l" style="left:1437px;top:731px">Restitution</div>
<div class="in" style="left:1602px;top:731px;width:297px">0</div>
<div class="t l" style="left:1437px;top:761px">Offset</div>
<div class="in" style="left:1602px;top:761px;width:146px">0<b>X</b></div>
<div class="in" style="left:1753px;top:761px;width:146px">0<b>Y</b></div>
<div class="t l" style="left:1437px;top:791px">Size</div>
<div class="in" style="left:1602px;top:791px;width:146px">32.8<b>W</b></div>
<div class="in" style="left:1753px;top:791px;width:146px">30<b>H</b></div>
<div class="d" style="left:1407px;top:826px;width:497px;height:1px"></div>

<!-- RigidBody -->
<div class="hd" style="top:827px"><span>cc.RigidBody2D</span></div>
<svg style="left:1414px;top:836px" width="12" height="12"><use href="#cd"/></svg>
<div class="cb" style="left:1436px;top:833px"></div><svg style="left:1436px;top:833px" width="18" height="18"><use href="#ck"/></svg>
<svg style="left:1464px;top:834px" width="16" height="16"><path d="M8 .8l3.500 6h-7zM1 10h5.500v5.500H1z" fill="none" stroke="#6ec08a" stroke-width="1.300"/><circle cx="13" cy="12.500" r="2.600" fill="none" stroke="#6ec08a" stroke-width="1.300"/></svg>
<svg style="left:1856px;top:834px" width="16" height="16"><use href="#qm"/></svg><svg style="left:1886px;top:834px" width="6" height="16"><use href="#vd"/></svg>
<div class="t l" style="left:1437px;top:862px">Group</div>
<div class="sel" style="left:1602px;top:862px;width:297px">player</div>
<svg style="left:1877px;top:869px" width="12" height="12"><use href="#cd"/></svg>
<div class="a" style="left:1437px;top:892px;width:157px;height:27px;overflow:hidden"><div class="t l" style="left:0;top:0">Enabled Contact Listener</div></div>
<div class="cb" style="left:1605px;top:896px"></div><svg style="left:1605px;top:896px" width="18" height="18"><use href="#ck"/></svg>
<div class="t l" style="left:1437px;top:922px">Bullet</div>
<div class="cb" style="left:1605px;top:926px"></div>
<div class="t l" style="left:1437px;top:952px">Type</div>
<div class="sel" style="left:1602px;top:952px;width:297px">Dynamic</div>
<svg style="left:1877px;top:959px" width="12" height="12"><use href="#cd"/></svg>
<div class="t l" style="left:1437px;top:982px">Allow Sleep</div>
<div class="cb" style="left:1605px;top:986px"></div><svg style="left:1605px;top:986px" width="18" height="18"><use href="#ck"/></svg>

<!-- STATUS BAR -->
<div class="a" style="left:0;top:999px;width:1915px;height:31px;background:#2c2c2c;border-top:1px solid #111;box-sizing:border-box"></div>
<div class="t" style="left:17px;top:1003px;color:#e0404e">[PreviewInEditor] wall 层未找到!</div>
<svg style="left:1673px;top:1007px" width="16" height="16"><circle cx="8" cy="8" r="8" fill="#35c4f0"/><text x="8" y="13" font-family="Liberation Serif" font-size="13" font-weight="700" font-style="italic" text-anchor="middle" fill="#0b3a55">i</text></svg>
<div class="t" style="left:1693px;top:1003px;color:#a8a8a8">4</div>
<svg style="left:1714px;top:1007px" width="16" height="16"><circle cx="8" cy="8" r="8" fill="#f6c856"/><path d="M8 3v6" stroke="#553d10" stroke-width="2.200"/><circle cx="8" cy="12" r="1.300" fill="#553d10"/></svg>
<div class="t" style="left:1734px;top:1003px;color:#a8a8a8">7</div>
<svg style="left:1754px;top:1007px" width="16" height="16"><circle cx="8" cy="8" r="8" fill="#e45a4e"/><path d="M5 5l6 6M11 5l-6 6" stroke="#f4e0dc" stroke-width="2.200"/></svg>
<div class="t" style="left:1775px;top:1003px;color:#a8a8a8">4</div>
<svg style="left:1807px;top:1007px" width="13" height="16"><path d="M6.500 0a4.500 4.500 0 0 1 4.500 5v4l2 3H0l2-3V5A4.500 4.500 0 0 1 6.500 0z" fill="#bdbdbd"/><circle cx="6.500" cy="14" r="2" fill="#bdbdbd"/></svg>
<div class="t" style="left:1824px;top:1003px;color:#a8a8a8">0</div>
<div class="t" style="left:1842px;top:1003px;color:#a8a8a8">版本3.8.5</div>
</body></html>
